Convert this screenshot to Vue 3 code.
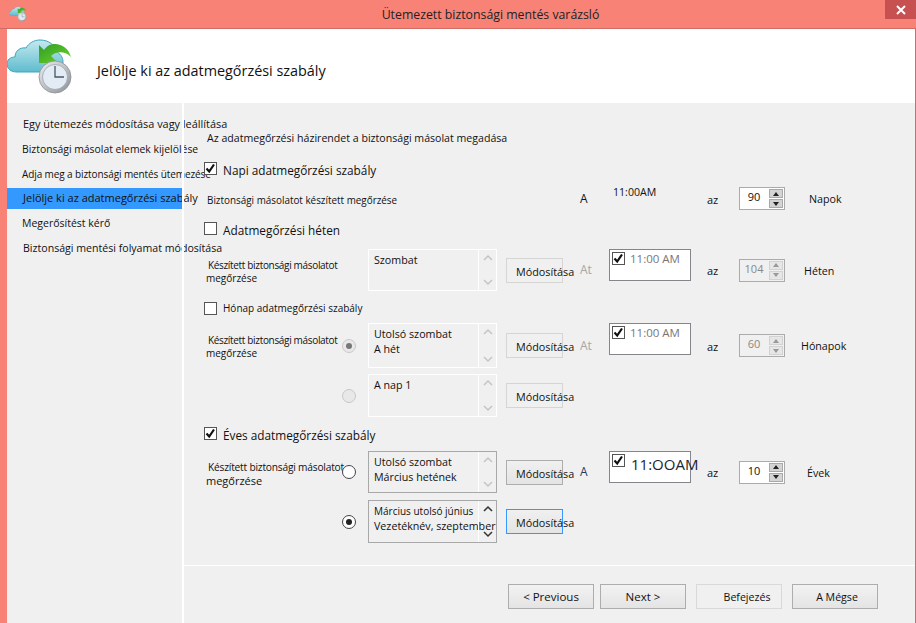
<template>
  <div class="window">
    <div class="titlebar">
      <svg class="title-icon" viewBox="7 38 66 57"><use href="#backup-icon" /></svg>
      <span class="title-text">Ütemezett biztonsági mentés varázsló</span>
      <div class="close-btn">
        <svg viewBox="0 0 10 10" width="10" height="10"><path d="M1 1l8 8M9 1l-8 8" stroke="#fff" stroke-width="2" /></svg>
      </div>
    </div>

    <div class="client">
      <div class="header">
        <svg class="header-icon" viewBox="7 38 66 57">
          <defs>
            <linearGradient id="cloud-fill" x1="0" y1="0" x2="0" y2="1">
              <stop offset="0" stop-color="#c4e9f0" />
              <stop offset="1" stop-color="#5fbccd" />
            </linearGradient>
            <linearGradient id="arrow-fill" x1="0" y1="0" x2="1" y2="1">
              <stop offset="0" stop-color="#2f9e22" />
              <stop offset="1" stop-color="#6fd12e" />
            </linearGradient>
            <linearGradient id="clock-rim" x1="0" y1="0" x2="1" y2="1">
              <stop offset="0" stop-color="#f2f2f2" />
              <stop offset="1" stop-color="#8b8f94" />
            </linearGradient>
            <g id="backup-icon">
              <path d="M17 72c-6 0-10-3-10-8 0-4 3-7 8-7 0-6 5-10 11-9 3-5 8-8 14-8 9 0 15 5 16 12 4 1 7 5 7 10 0 6-4 10-9 10z" fill="url(#cloud-fill)" stroke="#3fa5bb" stroke-width="1" />
              <path d="M39 45V63H58L51 56C55 52 64 50 71 57C69 49 62 44 55 44C50 44 47 46 44 50Z" fill="url(#arrow-fill)" />
              <circle cx="55" cy="77" r="16" fill="url(#clock-rim)" stroke="#8d9094" stroke-width="0.8" />
              <circle cx="55" cy="77" r="12.5" fill="#e3ecf5" stroke="#9aa3ad" stroke-width="0.8" />
              <path d="M55 66v11h9" fill="none" stroke="#48576a" stroke-width="1.3" />
            </g>
          </defs>
          <use href="#backup-icon" />
        </svg>
        <h1>Jelölje ki az adatmegőrzési szabály</h1>
      </div>

      <div class="body">
        <nav class="sidebar">
          <div
            v-for="step in steps"
            :key="step.text"
            :class="['step', step.cls, { active: step.active }]"
          >{{ step.text }}</div>
        </nav>

        <div class="main">
          <div class="form">
            <div class="form-title">Az adatmegőrzési házirendet a biztonsági másolat megadása</div>

            <section v-for="group in groups" :key="group.title">
              <div class="group-head" :style="{ height: group.head + 'px' }">
                <span class="check">
                  <svg v-if="group.checked" viewBox="0 0 13 13"><path d="M2.5 6.5l2.7 3 4.8-7" fill="none" stroke="#111" stroke-width="2.2" /></svg>
                </span>
                <span :class="['group-title', group.titleCls]">{{ group.title }}</span>
              </div>

              <div
                v-for="row in group.rows"
                :key="row.id"
                class="row"
                :style="{ height: row.h + 'px', marginBottom: row.gap + 'px' }"
              >
                <div v-if="row.caption" :class="['caption', row.captionCls]">
                  <span v-for="line in row.caption" :key="line">{{ line }}</span>
                </div>

                <span v-if="row.radio" :class="['radio', row.radio]"></span>

                <div v-if="row.list" :class="['list', row.listCls]">
                  <div class="list-text">
                    <span v-for="(line, i) in row.list" :key="line" :class="row.lineCls && row.lineCls[i]">{{ line }}</span>
                  </div>
                  <div class="list-arrows">
                    <svg viewBox="0 0 12 8"><path d="M2 6l4-4 4 4" fill="none" stroke="currentColor" stroke-width="1.5" /></svg>
                    <svg viewBox="0 0 12 8"><path d="M2 2l4 4 4-4" fill="none" stroke="currentColor" stroke-width="1.5" /></svg>
                  </div>
                </div>

                <div v-if="row.list" :class="['change-btn', row.btnCls]">Módosítása</div>

                <span v-if="row.at" :class="['at', row.atCls]">{{ row.at }}</span>

                <div v-if="row.plainTime" class="plain-time">{{ row.plainTime }}</div>
                <div v-if="row.time" class="time-box">
                  <span class="check small">
                    <svg viewBox="0 0 13 13"><path d="M2.5 6.5l2.7 3 4.8-7" fill="none" stroke="#111" stroke-width="2.2" /></svg>
                  </span>
                  <span :class="['time-text', row.timeCls]">{{ row.time }}</span>
                </div>

                <span v-if="row.count" class="az">az</span>

                <div v-if="row.count" :class="['spin', { off: row.off }]">
                  <span class="spin-value">{{ row.count }}</span>
                  <div class="spin-btns">
                    <div class="spin-btn"><i class="up"></i></div>
                    <div class="spin-btn"><i class="down"></i></div>
                  </div>
                </div>

                <span v-if="row.unit" class="unit" :style="{ marginLeft: row.unitX + 'px' }">{{ row.unit }}</span>
              </div>
            </section>
          </div>

          <div class="footer">
            <div class="wiz-btn prev">&lt; Previous</div>
            <div class="wiz-btn">Next &gt;</div>
            <div class="wiz-btn off">Befejezés</div>
            <div class="wiz-btn cancel">A Mégse</div>
          </div>
        </div>
      </div>
    </div>
  </div>
</template>

<script setup>
const steps = [
  { text: 'Egy ütemezés módosítása vagy leállítása', cls: 'first' },
  { text: 'Biztonsági másolat elemek kijelölése', cls: 'narrow' },
  { text: 'Adja meg a biztonsági mentés ütemezése', cls: 'tight' },
  { text: 'Jelölje ki az adatmegőrzési szabály', active: true },
  { text: 'Megerősítést kérő', cls: 'short' },
  { text: 'Biztonsági mentési folyamat módosítása', cls: 'last' },
]

const keep = ['Készített biztonsági másolatot', 'megőrzése']

const groups = [
  {
    title: 'Napi adatmegőrzési szabály',
    checked: true,
    head: 25,
    rows: [
      {
        id: 'day', h: 22, gap: 13,
        caption: ['Biztonsági másolatot készített megőrzése'], captionCls: 'single',
        at: 'A', plainTime: '11:00AM', count: 90, unit: 'Napok', unitX: 24,
      },
    ],
  },
  {
    title: 'Adatmegőrzési héten',
    checked: false,
    head: 27,
    rows: [
      {
        id: 'week', h: 42, gap: 11,
        caption: keep, captionCls: 'small',
        list: ['Szombat'], listCls: 'off', btnCls: 'off',
        at: 'At', atCls: 'off', time: '11:00 AM', count: 104, off: true, unit: 'Héten', unitX: 19,
      },
    ],
  },
  {
    title: 'Hónap adatmegőrzési szabály',
    titleCls: 'small',
    checked: false,
    head: 21,
    rows: [
      {
        id: 'month-1', h: 45, gap: 6,
        caption: keep, captionCls: 'small', radio: 'off on',
        list: ['Utolsó szombat', 'A hét'], listCls: 'off', btnCls: 'off',
        at: 'At', atCls: 'off', time: '11:00 AM', count: 60, off: true, unit: 'Hónapok', unitX: 16,
      },
      {
        id: 'month-2', h: 43, gap: 10,
        radio: 'off', list: ['A nap 1'], listCls: 'off', btnCls: 'off',
      },
    ],
  },
  {
    title: 'Éves adatmegőrzési szabály',
    checked: true,
    head: 24,
    rows: [
      {
        id: 'year-1', h: 42, gap: 7,
        caption: keep, radio: 'plain',
        list: ['Utolsó szombat', 'Március hetének'], listCls: 'faded', btnCls: 'ready',
        at: 'A', atCls: 'blue', time: '11:OOAM', timeCls: 'big', count: 10, unit: 'Évek', unitX: 22,
      },
      {
        id: 'year-2', h: 43, gap: 0,
        radio: 'on', list: ['Március utolsó június', 'Vezetéknév, szeptember'],
        lineCls: ['tiny'], btnCls: 'focus',
      },
    ],
  },
]
</script>

<style>
html, body { margin: 0; background: #f98276; }
</style>

<style scoped>
.window { width: 916px; height: 623px; display: flex; flex-direction: column; background: #f98276; overflow: hidden; font-family: "Open Sans", "Noto Sans", sans-serif; color: #111; font-size: 11px; }

.titlebar { height: 28px; flex-shrink: 0; display: flex; align-items: center; justify-content: center; padding-left: 65px; position: relative; border-bottom: 1px solid #cf6d64; }
.title-icon { position: absolute; left: 9px; top: 6px; width: 18px; height: 16px; }
.title-text { font-size: 12.3px; color: #222; }
.close-btn { position: absolute; right: 0; top: 0; width: 31px; height: 19px; background: #c75050; display: flex; align-items: center; justify-content: center; }

.client { flex: 1; min-height: 0; margin-left: 7px; border-right: 1px solid #cf6d64; display: flex; flex-direction: column; background: #fff; }
.header { height: 74px; flex-shrink: 0; display: flex; align-items: center; position: relative; padding-left: 90px; }
.header-icon { position: absolute; left: 0; top: 9px; width: 66px; height: 57px; }
.header h1 { margin: 8px 0 0; font-size: 14.4px; font-weight: 400; color: #111; }

.body { flex: 1; min-height: 0; display: flex; background: #f0f0f0; }
.sidebar { width: 175px; flex-shrink: 0; padding-top: 9px; display: flex; flex-direction: column; }
.step { height: 24.8px; line-height: 24px; padding-left: 15px; white-space: nowrap; font-size: 11px; }
.step.first { padding-left: 16px; font-size: 10.9px; }
.step.narrow { font-size: 10.4px; }
.step.tight { font-size: 10px; letter-spacing: -0.1px; }
.step.short { font-size: 10.5px; }
.step.last { padding-left: 16px; font-size: 10.6px; }
.step.active { background: #3399ff; height: 21px; line-height: 20px; margin: 2px 0; padding-left: 16px; }

.main { flex: 1; min-width: 0; border-left: 2px solid #fff; display: flex; flex-direction: column; position: relative; }
.form { flex: 1; padding: 25px 0 0 23px; }
.form-title { height: 34px; line-height: 20px; font-size: 10.6px; white-space: nowrap; }

.group-head { display: flex; align-items: flex-start; margin-left: -3px; }
.check { width: 13px; height: 13px; border: 1px solid #555; background: #fff; box-sizing: border-box; flex-shrink: 0; display: block; }
.check svg { display: block; width: 13px; height: 13px; margin: -1px 0 0 -1px; }
.group-title { margin: 1px 0 0 6px; font-size: 11.8px; line-height: 14px; }
.group-title.small { font-size: 10px; line-height: 11px; }

.row { display: grid; grid-template-columns: 135px 14px 12px 129px 9px 57px 17px 29px 82px 16px 32px 46px auto; align-items: center; }
.caption { grid-column: 1; display: flex; flex-direction: column; white-space: nowrap; font-size: 11px; line-height: 13px; margin: 3px 0 0 -1px; }
.caption span:first-child { margin-left: 2px; font-size: 10.2px; letter-spacing: -0.2px; }
.caption.small { font-size: 10px; }
.caption.small span:first-child { font-size: 10px; letter-spacing: -0.33px; }
.caption.single { font-size: 9.9px; margin: 3px 0 0 0; }
.caption.single span:first-child { margin-left: 0; font-size: 9.9px; letter-spacing: 0; }

.radio { grid-column: 2; width: 14px; height: 14px; border-radius: 50%; box-sizing: border-box; border: 1px solid #444; background: #fff; position: relative; }
.radio.off { border-color: #c8c8c8; background: #e8e8e8; }
.radio.on::after { content: ""; position: absolute; inset: 3px; border-radius: 50%; background: #222; }
.radio.off.on::after { background: #777; }

.list { grid-column: 4; align-self: stretch; display: flex; border: 1px solid #a8a8a8; box-sizing: border-box; min-width: 0; }
.list.off { border-color: #fff; }
.list-text { flex: 1; min-width: 0; padding: 3px 0 0 5px; display: flex; flex-direction: column; font-size: 10.7px; line-height: 15px; white-space: nowrap; }
.list-text .tiny { font-size: 10px; }
.list-arrows { width: 18px; flex-shrink: 0; border-left: 1px solid #fff; display: flex; flex-direction: column; justify-content: space-between; align-items: center; padding: 4px 0; color: #333; box-sizing: border-box; }
.list-arrows svg { width: 12px; height: 8px; display: block; }
.list.off .list-arrows, .list.faded .list-arrows { color: #c4c4c4; }

.change-btn { grid-column: 6; height: 25px; line-height: 26px; border: 1px solid #d5d5d5; box-sizing: border-box; padding-left: 9px; white-space: nowrap; font-size: 10.8px; }
.change-btn.ready { border-color: #adadad; background: linear-gradient(#f0f0f0, #e4e4e4); }
.change-btn.focus { border-color: #3399ff; background: linear-gradient(#f0f0f0, #e4e4e4); }

.at { grid-column: 8; font-size: 12px; margin-top: -1px; }
.at.off { color: #a6a6a6; }
.at.blue { color: #1f3a5f; }

.plain-time { grid-column: 9; align-self: start; padding-left: 4px; margin-top: -2px; font-size: 10.6px; line-height: 14px; white-space: nowrap; }
.time-box { grid-column: 9; align-self: start; height: 32px; border: 1px solid #85858d; background: #fff; box-sizing: border-box; display: flex; align-items: flex-start; padding: 2px 0 0 2px; white-space: nowrap; }
.check.small { margin-top: 0; }
.time-text { margin: -1px 0 0 5px; font-size: 11.5px; line-height: 15px; color: #777; }
.time-text.big { font-size: 15px; line-height: 20px; margin: 0 0 0 6px; color: #1a2635; }

.az { grid-column: 11; font-size: 11px; margin-top: 1px; }

.spin { grid-column: 12; height: 23px; border: 1px solid #ababab; background: #fff; box-sizing: border-box; display: flex; align-items: center; padding-right: 1px; }
.spin.off { background: #f0f0f0; color: #888; }
.spin-value { flex: 1; text-align: center; font-size: 11px; margin: -4px 0 0 -1px; }
.spin-btns { width: 14px; display: flex; flex-direction: column; gap: 1px; }
.spin-btn { height: 9px; background: #d4d4d4; border: 1px solid #a9a9a9; box-sizing: border-box; display: flex; align-items: center; justify-content: center; }
.spin.off .spin-btn { background: #e6e6e6; border-color: #d2d2d2; }
.spin-btn i { width: 0; height: 0; border-left: 3.5px solid transparent; border-right: 3.5px solid transparent; }
.spin-btn .up { border-bottom: 4px solid #222; }
.spin-btn .down { border-top: 4px solid #222; }
.spin.off .up { border-bottom-color: #999; }
.spin.off .down { border-top-color: #999; }

.unit { grid-column: 13; font-size: 10.7px; white-space: nowrap; margin-top: 1px; }

.footer { height: 58px; flex-shrink: 0; box-sizing: border-box; border-top: 1px solid #fff; padding: 18px 37px 0 0; display: flex; justify-content: flex-end; gap: 10px; }
.wiz-btn { width: 86px; height: 25px; line-height: 23px; box-sizing: border-box; border: 1px solid #adadad; background: linear-gradient(#f2f2f2, #e4e4e4); text-align: center; font-size: 11.5px; }
.wiz-btn.prev { margin-right: -4px; }
.wiz-btn.off { border-color: #d9d9d9; background: #f0f0f0; padding-left: 16px; line-height: 25px; font-size: 10.6px; }
.wiz-btn.cancel { padding-left: 4px; line-height: 25px; font-size: 10.6px; }
</style>
